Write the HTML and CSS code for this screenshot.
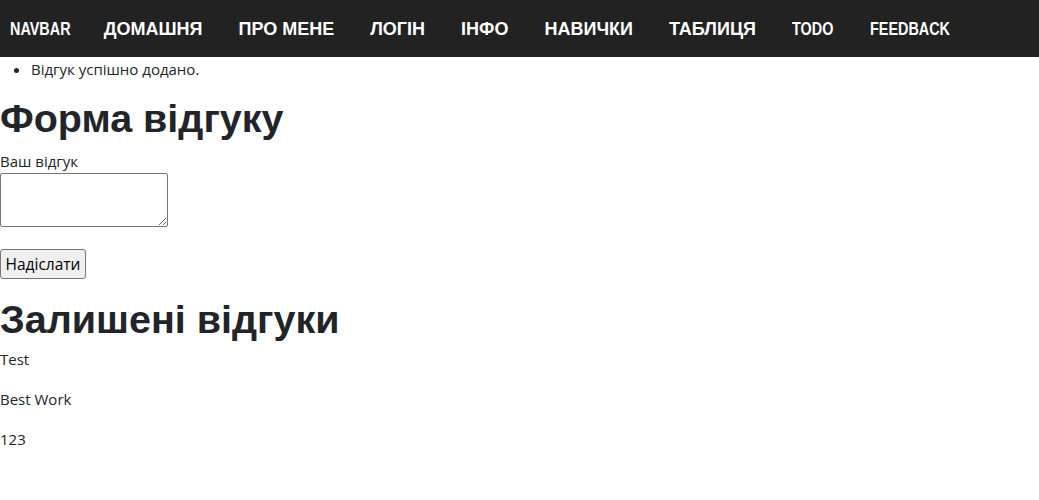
FILE: index.html
```html
<!DOCTYPE html>
<html lang="uk">
<head>
<meta charset="utf-8">
<link rel="stylesheet" href="styles.css">
</head>
<body>
<nav class="navbar">
  <a class="brand" href="#"><span class="narrow narrow-brand">NAVBAR</span></a>
  <a class="nav-link" href="#">ДОМАШНЯ</a>
  <a class="nav-link" href="#">ПРО МЕНЕ</a>
  <a class="nav-link" href="#">ЛОГІН</a>
  <a class="nav-link" href="#">ІНФО</a>
  <a class="nav-link" href="#">НАВИЧКИ</a>
  <a class="nav-link" href="#">ТАБЛИЦЯ</a>
  <a class="nav-link" href="#"><span class="narrow narrow-todo">TODO</span></a>
  <a class="nav-link" href="#"><span class="narrow narrow-feedback">FEEDBACK</span></a>
</nav>
<ul class="messages">
  <li>Відгук успішно додано.</li>
</ul>
<h1 class="title">Форма відгуку</h1>
<form class="form">
  <label class="label" for="fb">Ваш відгук</label>
  <textarea id="fb" class="area"></textarea>
  <button type="button" class="btn">Надіслати</button>
</form>
<h1 class="title title-2">Залишені відгуки</h1>
<p class="fb">Test</p>
<p class="fb">Best Work</p>
<p class="fb">123</p>
</body>
</html>
```
FILE: styles.css
```css
html, body {
  margin: 0;
  padding: 0;
}
body {
  font-family: "Open Sans", "Noto Sans", sans-serif;
  font-size: 15px;
  line-height: 24px;
  color: #212529;
  background: #fff;
}
.navbar {
  height: 57px;
  background: #222222;
  display: flex;
  align-items: center;
  padding-left: 10px;
  gap: 36px;
  font-family: "Liberation Sans", Arial, sans-serif;
  font-weight: 700;
  font-size: 18px;
  text-transform: uppercase;
}
.navbar a {
  color: #fff;
  text-decoration: none;
  line-height: 1;
  display: block;
}
.narrow {
  display: inline-block;
  transform: scaleX(0.8);
  transform-origin: left center;
}
.narrow-brand {
  margin-right: -15px;
}
.narrow-todo {
  margin-right: -10px;
}
.narrow-feedback {
  margin-right: -20px;
}
.brand {
  margin-right: -3px;
}
.messages {
  margin: 0;
  padding: 0 0 0 31px;
}
.title {
  font-family: "Liberation Sans", Arial, sans-serif;
  font-size: 39.5px;
  font-weight: 700;
  line-height: 48px;
  margin: 13px 0 0 0;
  color: #212529;
}
.form {
  display: flex;
  flex-direction: column;
  align-items: flex-start;
}
.label {
  margin-top: 7px;
}
.area {
  box-sizing: border-box;
  width: 168px;
  height: 54px;
  margin: 0;
  border: 1px solid #767676;
  border-radius: 2px;
}
.btn {
  box-sizing: border-box;
  margin-top: 22px;
  height: 30px;
  width: 86px;
  font-family: inherit;
  font-size: 15.5px;
  line-height: 20px;
  padding: 0;
  border: 1px solid #767676;
  border-radius: 3px;
  background: #efefef;
  color: #000;
}
.title-2 {
  margin-top: 16px;
}
.fb {
  margin: 4px 0 16px 0;
}
.fb + .fb {
  margin-top: 0;
}
```
